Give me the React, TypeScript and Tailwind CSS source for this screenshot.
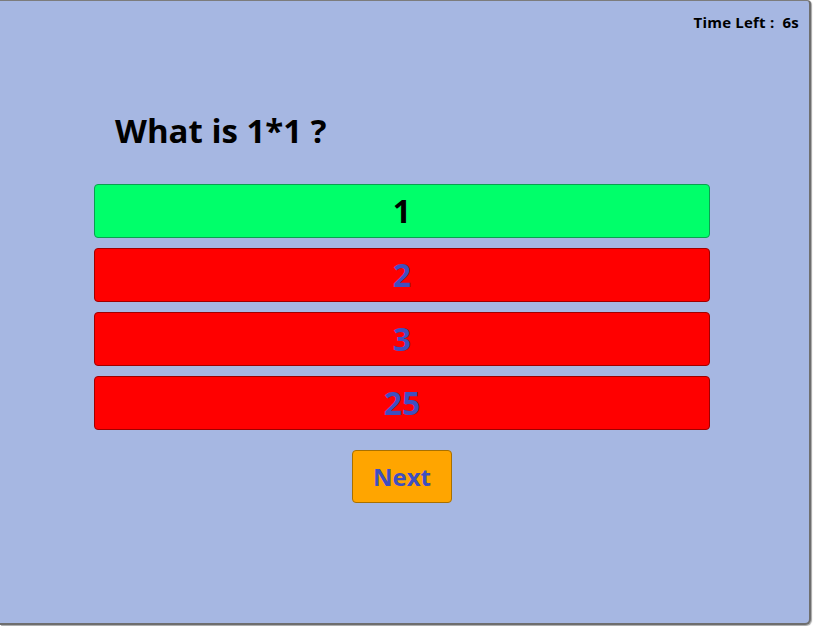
import React from "react";

const options = [
  { label: "1", correct: true },
  { label: "2", correct: false },
  { label: "3", correct: false },
  { label: "25", correct: false },
];

export default function App() {
  return (
    <div className="w-[813px] h-[626px] bg-white overflow-hidden" style={{ fontFamily: '"Open Sans", "Noto Sans", sans-serif' }}>
      <div className="w-[811px] h-[625px] bg-[#a6b7e2] border-t border-t-[#7c7c7c] border-r-2 border-r-[#6e6e6e] border-b-2 border-b-[#6e6e6e] rounded-br-[6px] rounded-tr-[4px] shadow-[1px_1px_1px_rgba(0,0,0,0.35)] flex flex-col">
        <div className="flex justify-end pr-[10px] pt-[11px] h-[30px]">
          <span className="text-[15px] font-bold text-black leading-[20px] tracking-[0.2px]">Time Left :&nbsp; 6s</span>
        </div>
        <div className="pl-[94px] w-[710px] flex flex-col">
          <div className="mt-[78px] pl-[21px] text-[33px] font-bold text-black leading-[44px]">What is 1*1 ?</div>
          <div className="mt-[31px] flex flex-col gap-[10px]">
            {options.map((o) =>
              o.correct ? (
                <div key={o.label} className="h-[54px] rounded-[4px] border border-[#0aa050] bg-[#00ff6a] flex items-center justify-center text-[32px] font-bold text-black">
                  {o.label}
                </div>
              ) : (
                <div key={o.label} className="h-[54px] rounded-[4px] border border-[#a00000] bg-[#ff0000] flex items-center justify-center text-[32px] font-bold text-[#3f4fc0]">
                  {o.label}
                </div>
              )
            )}
          </div>
          <div className="mt-[20px] flex justify-center">
            <div className="w-[100px] h-[53px] rounded-[4px] border border-[#a87000] bg-[#ffa500] flex items-center justify-center text-[24px] font-bold text-[#3f4fc0]">
              Next
            </div>
          </div>
        </div>
      </div>
    </div>
  );
}
